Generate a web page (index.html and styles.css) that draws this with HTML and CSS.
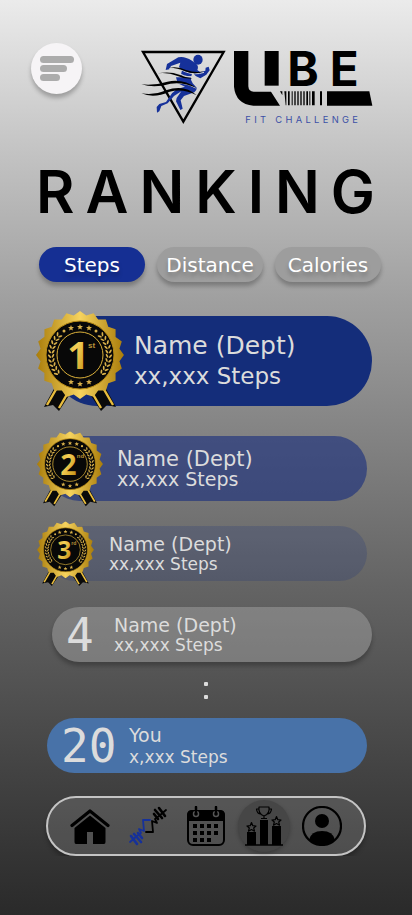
FILE: index.html
```html
<!DOCTYPE html>
<html lang="en">
<head>
<meta charset="utf-8">
<meta name="viewport" content="width=device-width, initial-scale=1">
<title>UBE Fit Challenge – Ranking</title>
<link rel="stylesheet" href="styles.css">
</head>
<body>
<svg class="defs" aria-hidden="true">
  <defs>
    <linearGradient id="gold" x1="0" y1="0" x2="1" y2="1">
      <stop offset="0" stop-color="#d9a520"/><stop offset=".4" stop-color="#f3cf58"/>
      <stop offset=".7" stop-color="#d8a92c"/><stop offset="1" stop-color="#b07f0c"/>
    </linearGradient>
    <linearGradient id="rim" x1="0" y1="0" x2="1" y2="0">
      <stop offset="0" stop-color="#a97c0a"/><stop offset=".5" stop-color="#f6d35e"/>
      <stop offset="1" stop-color="#a97c0a"/>
    </linearGradient>
    <polygon id="penta" points="44,0 85.8,30.4 69.9,79.6 18.1,79.6 2.2,30.4"/>
    <clipPath id="scallop">
      <use href="#penta"/>
      <use href="#penta" transform="rotate(18 44 44)"/>
      <use href="#penta" transform="rotate(36 44 44)"/>
      <use href="#penta" transform="rotate(54 44 44)"/>
    </clipPath>
    <polygon id="star" points="0,-3 .8,-1 3,-.9 1.3,.5 1.9,2.6 0,1.4 -1.9,2.6 -1.3,.5 -3,-.9 -.8,-1"/>
    <g id="leaf">
      <ellipse cx="13.5" cy="42" rx=".9" ry="2.2" transform="rotate(-35 13.5 42)"/>
      <ellipse cx="17" cy="42" rx=".9" ry="2.2" transform="rotate(35 17 42)"/>
    </g>
    <g id="laurel">
      <use href="#leaf" transform="rotate(-42 44 44)"/><use href="#leaf" transform="rotate(-33 44 44)"/>
      <use href="#leaf" transform="rotate(-24 44 44)"/><use href="#leaf" transform="rotate(-15 44 44)"/>
      <use href="#leaf" transform="rotate(-6 44 44)"/><use href="#leaf" transform="rotate(3 44 44)"/>
      <use href="#leaf" transform="rotate(12 44 44)"/><use href="#leaf" transform="rotate(21 44 44)"/>
      <use href="#leaf" transform="rotate(30 44 44)"/><use href="#leaf" transform="rotate(39 44 44)"/>
    </g>
    <g id="ribbon">
      <path d="M20 74 L8 96 L17 94 L23 100 L38 77Z" fill="#0a0a0a"/>
      <path d="M22 75 L11 94 M34 78 L23 97" stroke="#e9bd3e" stroke-width="2.4"/>
    </g>
    <symbol id="medal" viewBox="0 0 88 101">
      <use href="#ribbon"/>
      <use href="#ribbon" transform="translate(88 0) scale(-1 1)"/>
      <rect width="88" height="88" fill="url(#rim)" clip-path="url(#scallop)"/>
      <circle cx="44" cy="44" r="34" fill="#080808" stroke="#b78a16"/>
      <circle cx="44" cy="44" r="23" fill="none" stroke="#dcb13a"/>
      <g fill="#d8b04a">
        <use href="#laurel"/>
        <use href="#laurel" transform="translate(88 0) scale(-1 1)"/>
        <use href="#star" x="44" y="16"/><use href="#star" x="35" y="17"/><use href="#star" x="53" y="17"/>
        <circle cx="28" cy="20" r="1.5"/><circle cx="60" cy="20" r="1.5"/>
        <use href="#star" x="44" y="73"/><use href="#star" x="35" y="71"/><use href="#star" x="53" y="71"/>
      </g>
    </symbol>
  </defs>
</svg>

<header class="header">
  <button class="menu" type="button" aria-label="Menu"><span></span><span></span><span></span></button>
  <svg class="logo" viewBox="0 0 699 234" role="img" aria-label="UBE Fit Challenge">
    <path d="M9 12 H251 L130 221Z" fill="none" stroke="#000" stroke-width="7"/>
    <g transform="translate(-30 -24)">
      <g fill="#16319a">
        <ellipse cx="204" cy="59" rx="14" ry="15"/>
        <path d="M107 90 L111 72 L145 52 Q162 47 186 62 L199 72 Q207 79 202 90 L211 97 L226 92 L227 83 L236 80 L239 91 L229 104 L211 115 L197 108 L187 97 L184 109 L152 108 L156 91 L147 81 L151 68 L123 78 L118 88Z"/>
        <path d="M138 112 L183 112 Q181 122 188 130 L200 143 Q201 151 193 157 L162 168 L152 181 L158 206 L151 210 L138 184 L140 174 L154 154 L132 168 L113 190 L94 198 L88 214 L81 218 L80 201 L88 192 L108 186 L126 160 L140 148 L165 140 L143 130Z"/>
      </g>
      <path d="M118 86 Q145 83 165 95 Q195 107 222 97" fill="none" stroke="#d2d2d2" stroke-width="3"/>
      <path d="M118 83 Q145 78 168 90 Q195 100 222 94 Q196 106 165 94 Q143 83 118 83Z"/>
      <path d="M120 97 Q150 101 163 108 Q175 112 189 110" fill="none" stroke="#d2d2d2" stroke-width="4"/>
      <path d="M83 100 Q120 93 148 104 Q168 113 187 115 Q165 118 143 108 Q113 96 83 100Z"/>
      <path d="M112 133 Q160 122 197 144" fill="none" stroke="#d2d2d2" stroke-width="3"/>
      <path d="M34 133 Q75 137 112 125 Q160 115 199 144 Q161 125 121 131 Q75 145 34 133Z"/>
      <path d="M34 160 Q75 166 108 151 Q163 132 200 166 Q160 144 119 155 Q72 176 34 160Z"/>
    </g>
    <g transform="translate(255 -24)">
      <path d="M27 33 H70 V139 Q71 155 86 155 H138 L165 197 H85 Q32 192 27 140Z"/>
      <path d="M119 33 H161 V137 H119Z"/>
      <path d="M165 154 H172 V166Z M178 154 h6 v42 h-2Z M189 154 h5 v42 h-5Z M200 154 h3 v42 h-3Z M208 154 h4 v42 h-4Z M217 154 h4 v42 h-4Z M226 154 h4 v42 h-4Z M235 154 h4 v42 h-4Z M244 154 h5 v42 h-5Z M253 154 h3 v42 h-3Z M261 154 h8 v42 h-8Z M285 154 h6 v42 h-6Z"/>
      <path d="M306 154 H433 L442 197 H306Z"/>
      <text class="logo-name" x="187" y="137">B</text>
      <text class="logo-name" x="314" y="137">E</text>
      <text class="logo-tag" x="61" y="249">FIT CHALLENGE</text>
    </g>
  </svg>
</header>

<main>
  <h1 class="title">RANKING</h1>

  <div class="tabs">
    <button class="tab tab-active" type="button">Steps</button>
    <button class="tab" type="button">Distance</button>
    <button class="tab" type="button">Calories</button>
  </div>

  <ol class="ranking">
    <li class="row first">
      <svg class="medal" viewBox="0 0 88 101" role="img" aria-label="First place"><use href="#medal"/><text class="place" x="42" y="58">1</text><text class="suffix" x="52" y="37">st</text></svg>
      <div class="info"><strong>Name (Dept)</strong><span>xx,xxx Steps</span></div>
    </li>
    <li class="row second">
      <svg class="medal" viewBox="0 0 88 101" role="img" aria-label="Second place"><use href="#medal"/><text class="place" x="42" y="58">2</text><text class="suffix" x="53" y="36">nd</text></svg>
      <div class="info"><strong>Name (Dept)</strong><span>xx,xxx Steps</span></div>
    </li>
    <li class="row third">
      <svg class="medal" viewBox="0 0 88 101" role="img" aria-label="Third place"><use href="#medal"/><text class="place" x="42" y="58">3</text><text class="suffix" x="53" y="36">rd</text></svg>
      <div class="info"><strong>Name (Dept)</strong><span>xx,xxx Steps</span></div>
    </li>
    <li class="row fourth">
      <b class="number">4</b>
      <div class="info"><strong>Name (Dept)</strong><span>xx,xxx Steps</span></div>
    </li>
    <li class="more" aria-hidden="true"><i></i><i></i></li>
    <li class="row you">
      <b class="number">20</b>
      <div class="info"><strong>You</strong><span>x,xxx Steps</span></div>
    </li>
  </ol>
</main>

<nav class="nav" aria-label="Main">
  <a href="#home" aria-label="Home">
    <svg viewBox="0 0 40 40"><path d="M2 19.500 L20 5 L38 19.500" fill="none" stroke="#000" stroke-width="3.200" stroke-linecap="round" stroke-linejoin="round"/><path d="M4.500 22 L20 9.500 L35.500 22 V36 Q35.500 38 34 38 H23 V26 H17 V38 H6 Q4.500 38 4.500 36Z"/></svg>
  </a>
  <a href="#workout" aria-label="Workout">
    <svg viewBox="0 0 40 40" fill="none" stroke-linecap="round" stroke-linejoin="round">
      <g stroke="#16319a"><path d="M2 36 L9 30 L13 27 L11 23 L16 25 L15 14 H22" stroke-width="1.800"/><path d="M3 30 L9 38 M6 28 L13 36 M10 27 L14 32" stroke-width="2.600"/></g>
      <g stroke="#000"><path d="M38 4 L31 10 L27 13 L29 17 L24 15 L25 26 H18" stroke-width="1.800"/><path d="M37 10 L31 2 M34 12 L27 4 M30 13 L26 8" stroke-width="2.600"/></g>
    </svg>
  </a>
  <a href="#calendar" aria-label="Calendar">
    <svg viewBox="0 0 40 40"><rect x="2" y="5" width="36" height="34" rx="5" fill="none" stroke="#000" stroke-width="2"/><path d="M1 15 V9 Q1 4 6 4 H34 Q39 4 39 9 V15Z"/><g fill="none" stroke="#555" stroke-width="1.500"><circle cx="10" cy="8" r="2.500"/><circle cx="30" cy="8" r="2.500"/></g><path d="M10 1 V8 M30 1 V8" stroke="#000" stroke-width="2.500" stroke-linecap="round"/><path d="M14 18h4v4h-4zM21 18h4v4h-4zM28 18h4v4h-4zM7 18h4v4H7zM7 25h4v4H7zM14 25h4v4h-4zM21 25h4v4h-4zM28 25h4v4h-4zM7 32h4v4H7zM14 32h4v4h-4zM21 32h4v4h-4z"/></svg>
  </a>
  <a class="nav-active" href="#ranking" aria-label="Ranking" aria-current="page">
    <svg viewBox="0 0 40 40"><path d="M1 39 H39" stroke="#000" stroke-width="1.500"/><path d="M3 26h9v13H3zM16 14h8v25h-8zM28 20h9v19h-9z"/><g fill="none" stroke="#000" stroke-width="1.200" stroke-linejoin="round"><path d="M15 1 H25 Q26 8 20 10 Q14 8 15 1Z M15 3 H12.500 Q13 8 17 8 M25 3 H27.500 Q27 8 23 8 M20 10 V12 M17 12.500 H23"/><path id="nav-star" d="M7.500 16.500 L8.800 19.700 L12 20 L9.700 22 L10.500 25.200 L7.500 23.500 L4.500 25.200 L5.300 22 L3 20 L6.200 19.700Z"/><use href="#nav-star" x="25" y="-6"/></g></svg>
  </a>
  <a href="#profile" aria-label="Profile">
    <svg viewBox="0 0 40 40"><circle cx="20" cy="20" r="19" fill="none" stroke="#000" stroke-width="2.200"/><circle cx="20" cy="15" r="7"/><path d="M7 34 Q9 25 20 25 Q31 25 33 34 Q28 39 20 39 Q12 39 7 34Z"/></svg>
  </a>
</nav>
</body>
</html>
```
FILE: styles.css
```css
* {
  box-sizing: border-box;
}

html {
  min-height: 100%;
  background: linear-gradient(#ebebeb 0%, #c2c2c2 17%, #9f9f9f 33%, #848484 47%, #646464 64%, #404040 86%, #2a2a2a 100%);
}

body {
  margin: 0;
  font-family: "DejaVu Sans", sans-serif;
  color: #dcdcdc;
}

.defs {
  position: absolute;
  width: 0;
  height: 0;
}

.header {
  display: flex;
  justify-content: space-between;
  align-items: flex-start;
  padding: 43px 39px 0 31px;
}

.menu {
  display: flex;
  flex-direction: column;
  justify-content: center;
  gap: 2px;
  width: 51px;
  height: 51px;
  padding: 0 9px;
  border: 0;
  border-radius: 50%;
  background: #f6f4f6;
  box-shadow: 0 4px 4px rgba(0, 0, 0, .25);
}

.menu span {
  width: 34px;
  height: 7px;
  border-radius: 4px;
  background: #acacac;
}

.menu span:nth-child(2) {
  width: 27px;
}

.menu span:nth-child(3) {
  width: 20px;
}

.logo {
  width: 233px;
  height: 78px;
  margin-top: 5px;
  overflow: visible;
}

.logo-name {
  font: 700 143px Inter, sans-serif;
}

.logo-tag {
  font: 400 28px Inter, sans-serif;
  letter-spacing: 10px;
  fill: #3c50a6;
}

.title {
  margin: 36px 24px 0 36px;
  font: 600 59px/60px Inter, sans-serif;
  letter-spacing: 11px;
  color: #000;
}

.tabs {
  display: grid;
  grid-template-columns: repeat(3, 1fr);
  gap: 12px;
  margin: 25px 31px 0 39px;
}

.tab {
  height: 35px;
  padding: 0;
  border: 0;
  border-radius: 18px;
  background: #9d9d9d;
  box-shadow: 0 4px 4px rgba(0, 0, 0, .25);
  color: #fff;
  font: 20px "DejaVu Sans", sans-serif;
  text-shadow: 0 4px 4px rgba(0, 0, 0, .25);
}

.tab-active {
  background: #152f93;
}

.ranking {
  margin: 34px 0 0;
  padding: 0;
  list-style: none;
}

.row {
  position: relative;
  display: flex;
  align-items: center;
  height: 55px;
  margin: 0 45px 25px 47px;
  border-radius: 45px;
}

.info strong,
.info span {
  display: block;
  font-size: 17px;
  font-weight: 400;
  line-height: 20px;
}

.info strong {
  font-size: 19px;
}

.medal {
  position: absolute;
  top: -5px;
  left: -10px;
  width: 66px;
  height: 76px;
}

.place {
  font: 700 38px "Open Sans", sans-serif;
  text-anchor: middle;
  fill: url(#gold);
}

.suffix {
  font: 700 8px "Liberation Sans", sans-serif;
  fill: #b89238;
}

.first {
  height: 90px;
  margin: 0 40px 30px 52px;
  padding-left: 82px;
  background: #142d7a;
}

.first .medal {
  left: -16px;
  width: 88px;
  height: 101px;
}

.first .info strong,
.first .info span {
  font-size: 23px;
  line-height: 30px;
}

.first .info strong {
  font-size: 25px;
}

.second {
  height: 65px;
  padding-left: 70px;
  background: rgba(21, 44, 125, .6);
}

.second .info strong {
  font-size: 21px;
}

.second .info span {
  font-size: 19px;
}

.third {
  padding-left: 62px;
  background: rgba(20, 45, 125, .2);
}

.third .medal {
  width: 57px;
  height: 66px;
}

.fourth {
  margin: 26px 40px 0 52px;
  background: rgba(196, 196, 196, .33);
  box-shadow: 0 4px 4px rgba(0, 0, 0, .25);
}

.number {
  width: 82px;
  padding-left: 14px;
  font: 400 46px "DejaVu Sans Mono", monospace;
}

.fourth .number {
  width: 62px;
}

.more {
  display: flex;
  flex-direction: column;
  justify-content: center;
  align-items: center;
  gap: 9px;
  height: 56px;
}

.more i {
  width: 4px;
  height: 4px;
  border-radius: 1px;
  background: #dcdcdc;
}

.you {
  margin-bottom: 0;
  background: #4872a8;
}

.you .info strong,
.you .info span {
  line-height: 22px;
}

.nav {
  display: grid;
  grid-template-columns: repeat(5, 1fr);
  place-items: center;
  height: 60px;
  margin: 23px 46px 0;
  padding: 0 13px;
  border: 2px solid #c4c4c4;
  border-radius: 30px;
  background: rgba(196, 196, 196, .18);
  box-shadow: 0 4px 4px rgba(0, 0, 0, .25);
}

.nav a {
  display: grid;
  place-items: center;
  width: 52px;
  height: 52px;
  border-radius: 50%;
}

.nav svg {
  width: 40px;
  height: 40px;
}

.nav .nav-active {
  background: #464646;
  box-shadow: 0 2px 4px rgba(0, 0, 0, .25);
}
```
